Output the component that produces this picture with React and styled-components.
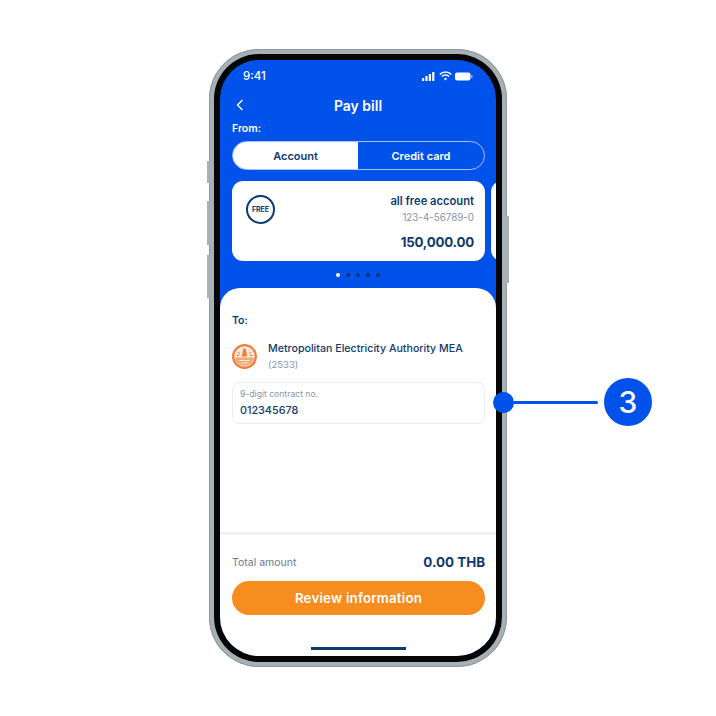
import React from "react";
import styled, { createGlobalStyle } from "styled-components";

const colors = {
  blue: "#0052ea",
  navy: "#0f3a6e",
  grey: "#8a94a6",
  slate: "#6b7a92",
  orange: "#f78c1f",
};

const GlobalStyle = createGlobalStyle`
  html, body { margin: 0; padding: 0; background: #fff; }
  body { font-family: Inter, "Liberation Sans", sans-serif; }
`;

const Page = styled.div`
  width: 716px;
  height: 716px;
  display: flex;
  align-items: center;
  justify-content: center;
  position: relative;
  overflow: hidden;
`;

const Phone = styled.div`
  width: 298px;
  height: 618px;
  box-sizing: border-box;
  padding: 5px;
  border-radius: 50px;
  background: #a7b0b5;
  position: relative;
  box-shadow: inset 0 0 0 1px #8f999f;
`;

const SideButton = styled.span`
  position: absolute;
  top: ${(p) => p.$top}px;
  height: ${(p) => p.$height}px;
  width: 3px;
  background: #a7b0b5;
  ${(p) => (p.$right ? "right: -2px;" : "left: -2px;")}
`;

const Bezel = styled.div`
  height: 100%;
  box-sizing: border-box;
  padding: 6px;
  border-radius: 45px;
  background: #060606;
`;

const Screen = styled.div`
  height: 100%;
  border-radius: 39px;
  background: ${colors.blue};
  overflow: hidden;
  display: flex;
  flex-direction: column;
`;

const StatusBar = styled.div`
  height: 23px;
  flex: none;
  padding: 0 23px 0 23px;
  display: flex;
  align-items: flex-end;
  justify-content: space-between;
  color: #fff;
  font-size: 11.5px;
  font-weight: 500;
  line-height: 14px;
`;

const StatusIcons = styled.div`
  display: flex;
  align-items: center;
  gap: 3.5px;
  height: 14px;
`;

const Header = styled.div`
  height: 20px;
  margin-top: 12px;
  flex: none;
  display: flex;
  align-items: center;
  justify-content: center;
  position: relative;
  color: #fff;
  font-size: 14px;
  font-weight: 600;
`;

const BackIcon = styled.svg`
  position: absolute;
  left: 16px;
  top: 4px;
`;

const Section = styled.div`
  padding: 0 11px 0 12px;
  flex: none;
`;

const FromLabel = styled.div`
  margin-top: 7px;
  color: #fff;
  font-size: 10.5px;
  font-weight: 600;
  line-height: 14px;
`;

const Tabs = styled.div`
  margin-top: 5px;
  height: 29px;
  box-sizing: border-box;
  border: 1px solid #a9c3f5;
  border-radius: 15px;
  display: flex;
  overflow: hidden;
`;

const Tab = styled.div`
  flex: ${(p) => (p.$active ? "0 0 125px" : "1")};
  display: flex;
  align-items: center;
  justify-content: center;
  font-size: 11px;
  font-weight: 600;
  color: ${(p) => (p.$active ? colors.navy : "#fff")};
  background: ${(p) => (p.$active ? "#fff" : "transparent")};
`;

const Carousel = styled.div`
  margin-top: 11px;
  display: flex;
  gap: 6px;
  height: 80px;
  flex: none;
  padding-left: 12px;
  overflow: hidden;
`;

const AccountCard = styled.div`
  width: 253px;
  flex: none;
  box-sizing: border-box;
  padding: 14px 11px 0 14px;
  background: #fff;
  border-radius: 11px;
  display: flex;
  justify-content: space-between;
`;

const NextCard = styled.div`
  width: 40px;
  flex: none;
  background: #fff;
  border-radius: 11px;
`;

const FreeBadge = styled.div`
  width: 29px;
  height: 29px;
  box-sizing: border-box;
  border: 2px solid ${colors.navy};
  border-radius: 50%;
  display: flex;
  align-items: center;
  justify-content: center;
  color: ${colors.navy};
  font-size: 7px;
  font-weight: 700;
`;

const AccountInfo = styled.div`
  display: flex;
  flex-direction: column;
  align-items: flex-end;
`;

const AccountName = styled.div`
  color: ${colors.navy};
  font-size: 11.2px;
  font-weight: 600;
  line-height: 13px;
`;

const AccountNumber = styled.div`
  margin-top: 3px;
  color: ${colors.grey};
  font-size: 9.8px;
  line-height: 13px;
`;

const Balance = styled.div`
  margin-top: 9px;
  color: ${colors.navy};
  font-size: 13.3px;
  font-weight: 700;
  line-height: 18px;
  letter-spacing: -0.2px;
`;

const Dots = styled.div`
  height: 27px;
  flex: none;
  display: flex;
  align-items: center;
  justify-content: center;
  gap: 6px;
`;

const Dot = styled.span`
  width: 4px;
  height: 4px;
  border-radius: 50%;
  background: ${(p) => (p.$active ? "#fff" : "#0c3478")};
`;

const Sheet = styled.div`
  flex: 1;
  background: #fff;
  border-radius: 20px 20px 0 0;
  display: flex;
  flex-direction: column;
`;

const SheetBody = styled.div`
  flex: 1;
  padding: 26px 11px 0 12px;
`;

const ToLabel = styled.div`
  color: ${colors.navy};
  font-size: 10.5px;
  font-weight: 600;
  line-height: 14px;
`;

const Biller = styled.div`
  margin-top: 14px;
  display: flex;
  align-items: center;
  gap: 11px;
`;

const BillerName = styled.div`
  color: ${colors.navy};
  font-size: 10.65px;
  font-weight: 500;
  line-height: 14px;
`;

const BillerCode = styled.div`
  margin-top: 3px;
  color: ${colors.grey};
  font-size: 9.5px;
  line-height: 12px;
`;

const Field = styled.div`
  margin-top: 11px;
  height: 42px;
  box-sizing: border-box;
  padding: 6px 7px;
  border: 1px solid #ebeef3;
  border-radius: 8px;
`;

const FieldLabel = styled.div`
  color: ${colors.grey};
  font-size: 8.6px;
  line-height: 10px;
`;

const FieldValue = styled.div`
  margin-top: 5px;
  color: ${colors.navy};
  font-size: 10.8px;
  font-weight: 500;
  line-height: 14px;
`;

const Footer = styled.div`
  flex: none;
  height: 124px;
  box-sizing: border-box;
  border-top: 3px solid #f0f1f3;
  padding: 18px 11px 0 12px;
`;

const TotalRow = styled.div`
  display: flex;
  align-items: center;
  justify-content: space-between;
  height: 18px;
`;

const TotalLabel = styled.div`
  color: ${colors.slate};
  font-size: 10.5px;
`;

const TotalValue = styled.div`
  color: ${colors.navy};
  font-size: 13.4px;
  font-weight: 700;
`;

const ReviewButton = styled.button`
  display: block;
  width: 100%;
  height: 34px;
  margin-top: 10px;
  border: 0;
  border-radius: 17px;
  background: ${colors.orange};
  color: #fff;
  font-family: inherit;
  font-size: 13.3px;
  font-weight: 600;
  letter-spacing: 0.2px;
`;

const HomeBar = styled.div`
  width: 95px;
  height: 2.5px;
  margin: 32px auto 0;
  background: ${colors.navy};
`;

const Callout = styled.div`
  position: absolute;
  left: 493px;
  top: 378px;
  display: flex;
  align-items: center;
`;

const CalloutDot = styled.span`
  width: 21px;
  height: 21px;
  border-radius: 50%;
  background: ${colors.blue};
`;

const CalloutLine = styled.span`
  width: 85px;
  height: 3px;
  margin-left: -1px;
  border-radius: 2px;
  background: ${colors.blue};
`;

const CalloutNumber = styled.span`
  width: 48px;
  height: 48px;
  margin-left: 6px;
  border-radius: 50%;
  background: ${colors.blue};
  color: #fff;
  display: flex;
  align-items: center;
  justify-content: center;
  font-size: 30px;
  font-weight: 500;
`;

const SignalIcon = () => (
  <svg width="13" height="9" viewBox="0 0 13 9" fill="#fff">
    <rect x="0" y="6" width="2.2" height="3" rx="0.5" />
    <rect x="3.4" y="4" width="2.2" height="5" rx="0.5" />
    <rect x="6.8" y="2" width="2.2" height="7" rx="0.5" />
    <rect x="10.2" y="0" width="2.2" height="9" rx="0.5" />
  </svg>
);

const WifiIcon = () => (
  <svg width="13" height="10" viewBox="0 0 13 10" fill="none" stroke="#fff" strokeWidth="1.5">
    <path d="M0.8 3.4a8 8 0 0 1 11.4 0" />
    <path d="M2.9 5.6a5 5 0 0 1 7.2 0" />
    <path d="M6.5 9.4L4.9 7.7a2.3 2.3 0 0 1 3.2 0z" fill="#fff" stroke="none" />
  </svg>
);

const BatteryIcon = () => (
  <svg width="18" height="9" viewBox="0 0 18 9">
    <rect x="0" y="0.5" width="15.5" height="8" rx="2" fill="#fff" />
    <rect x="16.2" y="3" width="1.3" height="3" rx="0.6" fill="#9dbcf7" />
  </svg>
);

// MEA seal, only a few pixels of detail are readable at this size
const MeaLogo = () => (
  <svg width="25" height="25" viewBox="0 0 25 25">
    <circle cx="12.5" cy="12.5" r="12.5" fill="#ee7f3c" />
    <circle cx="12.5" cy="12.5" r="10.2" fill="#fbe7da" />
    <path d="M11.4 4.5h2.2l.6 3 1 5h-5.4l1-5z" fill="#ee7f3c" />
    <path d="M3 13.5h19a9.6 9.6 0 0 1-19 0z" fill="#f4a878" />
    <path d="M6 8l2 2M19 8l-2 2M4.6 11.5h2.6M18 11.5h2.6" stroke="#ee7f3c" strokeWidth="1" />
    <path d="M7 16.5h11M9 19h7" stroke="#fbe7da" strokeWidth="1" />
  </svg>
);

export default function App() {
  const dots = [true, false, false, false, false];

  return (
    <Page>
      <GlobalStyle />
      <Phone>
        <SideButton $top={112} $height={22} />
        <SideButton $top={152} $height={44} />
        <SideButton $top={206} $height={43} />
        <SideButton $right $top={167} $height={67} />
        <Bezel>
          <Screen>
            <StatusBar>
              <span>9:41</span>
              <StatusIcons>
                <SignalIcon />
                <WifiIcon />
                <BatteryIcon />
              </StatusIcons>
            </StatusBar>
            <Header>
              <BackIcon width="8" height="12" viewBox="0 0 8 12" fill="none" stroke="#fff" strokeWidth="1.4">
                <path d="M6.5 1L1.5 6l5 5" />
              </BackIcon>
              Pay bill
            </Header>
            <Section>
              <FromLabel>From:</FromLabel>
              <Tabs>
                <Tab $active>Account</Tab>
                <Tab>Credit card</Tab>
              </Tabs>
            </Section>
            <Carousel>
              <AccountCard>
                <FreeBadge>FREE</FreeBadge>
                <AccountInfo>
                  <AccountName>all free account</AccountName>
                  <AccountNumber>123-4-56789-0</AccountNumber>
                  <Balance>150,000.00</Balance>
                </AccountInfo>
              </AccountCard>
              <NextCard />
            </Carousel>
            <Dots>
              {dots.map((active, index) => (
                <Dot key={index} $active={active} />
              ))}
            </Dots>
            <Sheet>
              <SheetBody>
                <ToLabel>To:</ToLabel>
                <Biller>
                  <MeaLogo />
                  <div>
                    <BillerName>Metropolitan Electricity Authority MEA</BillerName>
                    <BillerCode>(2533)</BillerCode>
                  </div>
                </Biller>
                <Field>
                  <FieldLabel>9-digit contract no.</FieldLabel>
                  <FieldValue>012345678</FieldValue>
                </Field>
              </SheetBody>
              <Footer>
                <TotalRow>
                  <TotalLabel>Total amount</TotalLabel>
                  <TotalValue>0.00 THB</TotalValue>
                </TotalRow>
                <ReviewButton>Review information</ReviewButton>
                <HomeBar />
              </Footer>
            </Sheet>
          </Screen>
        </Bezel>
      </Phone>
      <Callout>
        <CalloutDot />
        <CalloutLine />
        <CalloutNumber>3</CalloutNumber>
      </Callout>
    </Page>
  );
}
